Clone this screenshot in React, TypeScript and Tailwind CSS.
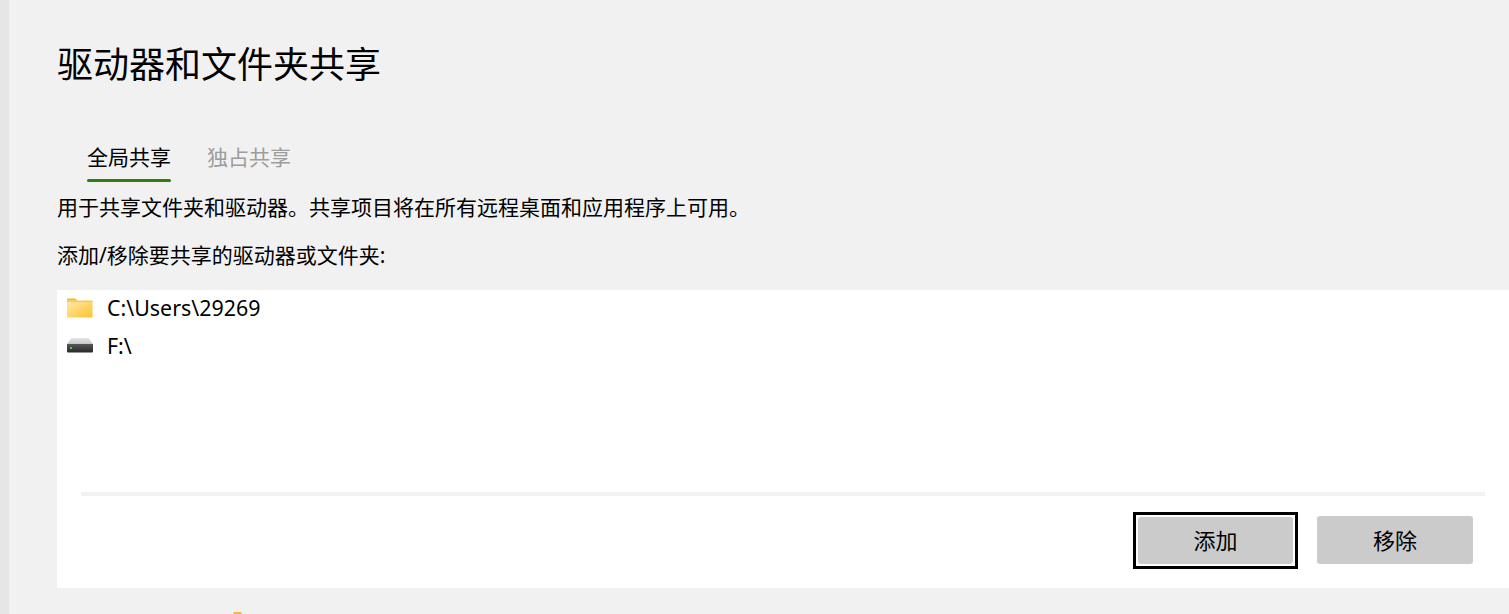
const font = "font-['Noto_Sans','Noto_Sans_CJK_SC',sans-serif]";

function FolderIcon() {
  return (
    <svg width="28" height="22" viewBox="0 0 28 22" className="shrink-0">
      <defs>
        <linearGradient id="fg" x1="0" y1="0" x2="1" y2="1">
          <stop offset="0" stopColor="#ffe9a8" />
          <stop offset="1" stopColor="#fdc22f" />
        </linearGradient>
      </defs>
      <path d="M1 2.5a1 1 0 0 1 1-1h7l2.5 2H1z" fill="#fbb417" />
      <path d="M1 4h25.5v16a.6.6 0 0 1-.6.6H1.6a.6.6 0 0 1-.6-.6z" fill="url(#fg)" />
      <path d="M1 3.6h25.5V5H1z" fill="#fdc63c" />
    </svg>
  );
}

function DriveIcon() {
  return (
    <svg width="28" height="18" viewBox="0 0 28 18" className="shrink-0">
      <defs>
        <linearGradient id="dt" x1="0" y1="0" x2="0" y2="1">
          <stop offset="0" stopColor="#e4e6e6" />
          <stop offset="1" stopColor="#c4c8c8" />
        </linearGradient>
        <linearGradient id="db" x1="0" y1="0" x2="0" y2="1">
          <stop offset="0" stopColor="#565656" />
          <stop offset="1" stopColor="#2a2a2a" />
        </linearGradient>
      </defs>
      <path d="M5.5 1h17L27 7H1z" fill="url(#dt)" />
      <path d="M1 7h26v7.5a1 1 0 0 1-1 1H2a1 1 0 0 1-1-1z" fill="url(#db)" />
      <rect x="4" y="10" width="2" height="2" fill="#3fd14a" />
    </svg>
  );
}

export default function App() {
  return (
    <div className={`relative flex h-[614px] w-[1509px] overflow-hidden bg-[#f1f1f1] text-black ${font}`}>
      <div className="h-full w-[9px] shrink-0 bg-[#e6e6e6]" />
      <main className="flex min-w-0 flex-1 flex-col pl-12">
        <h1 className="mt-[38px] h-[54px] text-[36px] leading-[54px] font-normal">驱动器和文件夹共享</h1>
        <div className="mt-[50px] flex gap-9 pl-[30px]">
          <div className="flex h-[40px] flex-col items-stretch">
            <span className="-mt-px text-[21px] leading-[32px]">全局共享</span>
            <span className="mt-[6px] h-[3px] rounded-[2px] bg-[#2f7d0c]" />
          </div>
          <span className="-mt-px text-[21px] leading-[32px] text-[#9c9c9c]">独占共享</span>
        </div>
        <p className="mt-[9px] text-[21px] leading-[32px]">用于共享文件夹和驱动器。共享项目将在所有远程桌面和应用程序上可用。</p>
        <p className="mt-4 text-[21px] leading-[32px]">添加/移除要共享的驱动器或文件夹:</p>

        <section className="mt-[19px] flex h-[298px] flex-col bg-white">
          <div className="flex h-[202px] flex-col pt-[1px]">
            <div className="flex h-[34px] items-center gap-[13px] pl-[9px]">
              <FolderIcon />
              <span className="text-[21.4px] leading-none">C:\Users\29269</span>
            </div>
            <div className="mt-[4px] flex h-[34px] items-center gap-[13px] pl-[9px]">
              <DriveIcon />
              <span className="text-[21.4px] leading-none">F:\</span>
            </div>
          </div>
          <div className="ml-6 mr-6 h-1 bg-[#f2f2f2]" />
          <div className="mt-4 flex justify-end gap-[19px] pr-9">
            <button className="h-[57px] w-[165px] border-[3px] border-black bg-white p-[2px]">
              <span className="flex h-full w-full items-center justify-center rounded-[3px] bg-[#cbcbcb] text-[22px]">添加</span>
            </button>
            <button className="mt-[4px] flex h-12 w-[156px] items-center justify-center rounded-[3px] bg-[#cbcbcb] text-[22px]">移除</button>
          </div>
        </section>
      </main>
      <div className="absolute bottom-0 left-[233px] h-[2px] w-[9px] rounded-t-sm bg-[#f9b92c]" />
    </div>
  );
}
